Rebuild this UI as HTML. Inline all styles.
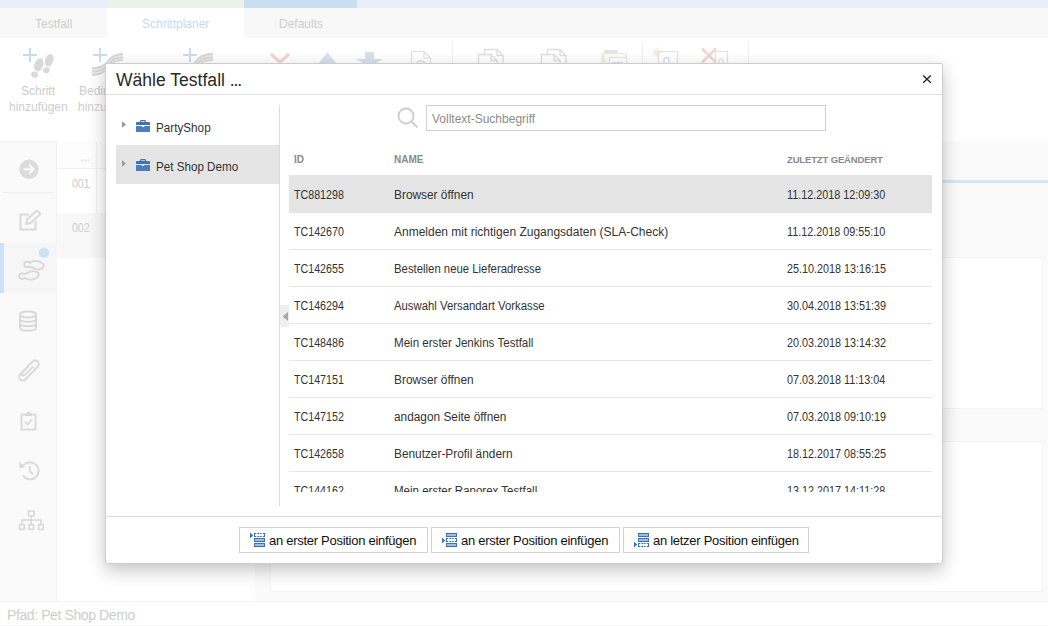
<!DOCTYPE html>
<html><head><meta charset="utf-8">
<style>
*{box-sizing:border-box;margin:0;padding:0}
html,body{width:1048px;height:626px;overflow:hidden;background:#fff;font-family:"Liberation Sans",sans-serif}
.a{position:absolute}
.t{position:absolute;white-space:nowrap;line-height:1}
#bg .t{color:#cdcdcd}
/* dialog */
#dlg{position:absolute;left:105px;top:63px;width:838px;height:501px;background:#fff;border:1px solid #cdcdcd;border-radius:2px;box-shadow:0 6px 17px rgba(0,0,0,.24)}
#dlg .t{color:#333}
.row{position:absolute;left:183px;width:643px;height:37px;border-bottom:1px solid #e6e6e6}
.row.sel{background:#e5e5e5;border-bottom-color:#e5e5e5;box-shadow:0 -1px 0 #e5e5e5}
.row span{position:absolute;top:12.5px;font-size:12px;line-height:12px;white-space:nowrap;color:#333}
.row .id{left:5px;transform:scaleX(.89);transform-origin:0 0}
.row .nm{left:105px;transform-origin:0 0}
.row .dt{left:498px;transform:scaleX(.9);transform-origin:0 0}
.hd{position:absolute;top:91px;font-size:10px;font-weight:bold;color:#8a8a8a;white-space:nowrap;line-height:10px}
.btn{position:absolute;top:463px;height:26px;border:1px solid #d2d2d2;background:#fff}
.btn span{position:absolute;top:6px;font-size:13px;line-height:13px;color:#111;white-space:nowrap;letter-spacing:-.28px}
.btn svg{position:absolute;top:4px}
</style></head>
<body>
<div id="bg">
  <!-- top strip -->
  <div class="a" style="left:0;top:0;width:1048px;height:8px;background:#e9eef8"></div>
  <div class="a" style="left:107px;top:0;width:137px;height:8px;background:#e8f3ea"></div>
  <div class="a" style="left:244px;top:0;width:113px;height:8px;background:#c9def1"></div>
  <!-- tabs -->
  <div class="a" style="left:0;top:8px;width:1048px;height:30px;background:#f8f8f8"></div>
  <div class="a" style="left:107px;top:8px;width:137px;height:30px;background:#fff"></div>
  <div class="t" style="left:35px;top:18px;font-size:12px">Testfall</div>
  <div class="t" style="left:142px;top:18px;font-size:12px;color:#c4daf0">Schrittplaner</div>
  <div class="t" style="left:279px;top:18px;font-size:12px">Defaults</div>
  <!-- toolbar texts -->
  <div class="t" style="left:21px;top:85px;font-size:12px">Schritt</div>
  <div class="t" style="left:9px;top:101px;font-size:12px">hinzufügen</div>
  <div class="t" style="left:79px;top:85px;font-size:12px">Bedingung</div>
  <div class="t" style="left:78px;top:101px;font-size:12px">hinzufügen</div>
  <!-- sidebar -->
  <div class="a" style="left:0;top:141px;width:57px;height:460px;background:#fafafa;border-right:1px solid #f2f2f2;border-top:1px solid #f2f2f2"></div>
  <div class="a" style="left:0;top:243px;width:4px;height:50px;background:#cfe2f5"></div>
  <div class="a" style="left:4px;top:243px;width:53px;height:50px;background:#f6f6f6"></div>
  <!-- content -->
  <div class="a" style="left:57px;top:141px;width:991px;height:460px;background:#fafafa;border-top:1px solid #f2f2f2"></div>
  <div class="a" style="left:57px;top:141px;width:198px;height:460px;background:#fff"></div>
  <div class="a" style="left:57px;top:142px;width:198px;height:27px;background:#fdfdfd;border-bottom:1px solid #f0f0f0"></div>
  <div class="a" style="left:57px;top:213px;width:198px;height:45px;background:#f8f8f8"></div>
  <div class="t" style="left:72px;top:178px;font-size:12px;transform:scaleX(.88);transform-origin:0 0">001</div><div class="a" style="left:96px;top:142px;width:1px;height:71px;background:#f0f0f0"></div>
  <div class="t" style="left:72px;top:222px;font-size:12px;transform:scaleX(.88);transform-origin:0 0">002</div>
  <div class="t" style="left:81px;top:151px;font-size:12px;transform:scaleX(.85);transform-origin:0 0">...</div>
  <div class="a" style="left:270px;top:141px;width:778px;height:460px;background:#fafafa"></div>
  <div class="a" style="left:942px;top:180px;width:106px;height:3px;background:#d6e6f5"></div>
  <div class="a" style="left:942px;top:257px;width:101px;height:152px;background:#fff;border:1px solid #f3f3f3;border-left:0"></div>
  <div class="a" style="left:270px;top:441px;width:773px;height:151px;background:#fff;border:1px solid #f3f3f3"></div>

  <svg class="a" style="left:0;top:0" width="1048" height="626" viewBox="0 0 1048 626">
    <!-- tool 1: plus + footprints -->
    <path d="M23 55H37M30 48V62" stroke="#cadbec" stroke-width="2"/>
    <g fill="#d9d9d9">
      <ellipse cx="38.8" cy="64.8" rx="4.3" ry="6.8" transform="rotate(22 38.8 64.8)"/>
      <ellipse cx="34.6" cy="74.6" rx="3.5" ry="3" transform="rotate(22 34.6 74.6)"/>
      <ellipse cx="49.2" cy="60.3" rx="4.1" ry="6.6" transform="rotate(18 49.2 60.3)"/>
      <ellipse cx="46.4" cy="70.3" rx="3.3" ry="3" transform="rotate(18 46.4 70.3)"/>
    </g>
    <!-- tool 2: plus + swoosh -->
    <path d="M93 55H107M100 48V62" stroke="#cadbec" stroke-width="1.8"/>
    <path d="M92 67C100 67 104 65 108 60C112 55 116 53 123 53V61C116 61 113 63 110 67C106 72 101 76 92 76Z" fill="#d8d8d8"/>
    <g fill="none" stroke="#f4f4f4" stroke-width="0.9">
      <path d="M92 70C100 70 104 68 108 63C112 58 116 56 123 56"/>
      <path d="M92 73C101 73 105 70 109 66C113 61 116 59 123 59"/>
    </g>
    <!-- tool 3 -->
    <path d="M183 55H197M190 48V62" stroke="#cadbec" stroke-width="1.8"/>
    <path d="M180 67C188 67 192 65 196 60C200 55 204 53 213 53V61C204 61 201 63 198 67C194 72 189 76 180 76Z" fill="#d8d8d8"/>
    <g fill="none" stroke="#f4f4f4" stroke-width="0.9">
      <path d="M180 70C188 70 192 68 196 63C200 58 204 56 213 56"/>
      <path d="M180 73C189 73 193 70 197 66C201 61 204 59 213 59"/>
    </g>
    <!-- red X -->
    <path d="M271 54L280 62L289 54" stroke="#f3d6d0" stroke-width="3.2" fill="none"/>
    <!-- up triangle -->
    <path d="M318 64L327.5 52.5L337 64Z" fill="#d6e1ed"/>
    <!-- down arrow -->
    <path d="M365 52H374V59H383L374 64H365L356 59H365Z" fill="#d6e1ed"/>
    <!-- doc -->
    <path d="M411.5 64V51.5H424L430.5 58V64M424 51.5V58H430.5" stroke="#e2e2e2" stroke-width="1.2" fill="none"/>
    <path d="M417 64A4 3 0 0 1 425 64" stroke="#d6e1ed" stroke-width="1.5" fill="none"/>
    <!-- separators -->
    <path d="M452.5 42V63M642.5 42V63M748.5 42V63" stroke="#f0f0f0" stroke-width="1"/>
    <!-- copy icons -->
    <g stroke="#dedede" stroke-width="1.3" fill="none">
      <path d="M484.5 54V49.5H497L503 55.5V64M497 49.5V55.5H503"/>
      <path d="M478.5 64V54.5H491L497 60.5V64M491 54.5V60.5H497"/>
      <path d="M547.5 54V49.5H560L566 55.5V64M560 49.5V55.5H566"/>
      <path d="M541.5 64V54.5H554L560 60.5V64M554 54.5V60.5H560"/>
    </g>
    <!-- clipboard -->
    <path d="M601.5 64V53.5H626.5V64" fill="#fdfbf6" stroke="#efe9dc" stroke-width="1"/>
    <rect x="601" y="53" width="4" height="11" fill="#f6eedb"/>
    <rect x="604" y="50" width="14" height="3.5" rx="1.2" fill="#e4e4e4"/>
    <rect x="609.5" y="57.5" width="17" height="7" fill="#fff" stroke="#e3e3e3"/>
    <path d="M612 62.5H623" stroke="#d8e2ee" stroke-width="1.2"/>
    <!-- sun doc -->
    <circle cx="657" cy="52.5" r="3" fill="#f7eccd"/>
    <path d="M652 52.5H662M657 47.5V57.5M653.5 49L660.5 56M660.5 49L653.5 56" stroke="#f7eccd" stroke-width="1"/>
    <path d="M658.5 64V51.5H677.5V64" stroke="#e3e3e3" stroke-width="1.2" fill="none"/>
    <path d="M664 64V60A2.5 2.5 0 0 1 669 60V64" stroke="#d6e1ed" stroke-width="1.3" fill="none"/>
    <!-- red x doc -->
    <path d="M715.5 64V51.5H727.5V64" stroke="#e3e3e3" stroke-width="1.2" fill="none"/>
    <path d="M702 48.5L716 62.5M716 48.5L702 62.5" stroke="#f3d6d0" stroke-width="2.6"/>
    <path d="M719 64V61A2 2 0 0 1 723 61V64" stroke="#d6e1ed" stroke-width="1.2" fill="none"/>

    <!-- sidebar icons -->
    <circle cx="29" cy="169.3" r="9.7" fill="#dcdcdc"/>
    <path d="M23.5 169.3H33.5M29.3 165L33.6 169.3L29.3 173.6" stroke="#fafafa" stroke-width="2" fill="none"/>
    <path d="M2.5 192.5H54" stroke="#eeeeee" stroke-width="1"/>
    <path d="M29 214.5H20.5V229.5H35.5V221" stroke="#d9d9d9" stroke-width="2" fill="none"/>
    <path d="M26 224L27 219.5L37 210.5L40.5 214L30.5 223Z" stroke="#d9d9d9" stroke-width="1.8" fill="none" stroke-linejoin="round"/>
    <circle cx="44" cy="252.6" r="5.2" fill="#cfe2f5"/>
    <g stroke="#d8d8d8" stroke-width="3.6" fill="#f6f6f6">
      <ellipse cx="27.2" cy="264.4" rx="2.1" ry="1.9"/><ellipse cx="36.8" cy="265.1" rx="6" ry="3.1" transform="rotate(12 36.8 265.1)"/><path d="M27.5 263.4L32 263.8V266.4L27.5 265.6Z"/>
      <ellipse cx="22.2" cy="276.1" rx="2.1" ry="1.9"/><ellipse cx="31.8" cy="275.4" rx="6.2" ry="3.2" transform="rotate(-10 31.8 275.4)"/><path d="M22.5 275L27 274.6V277.4L22.5 277.1Z"/>
    </g>
    <g fill="#f6f6f6">
      <ellipse cx="27.2" cy="264.4" rx="2.1" ry="1.9"/><ellipse cx="36.8" cy="265.1" rx="6" ry="3.1" transform="rotate(12 36.8 265.1)"/><path d="M27.5 263.4L32 263.8V266.4L27.5 265.6Z"/>
      <ellipse cx="22.2" cy="276.1" rx="2.1" ry="1.9"/><ellipse cx="31.8" cy="275.4" rx="6.2" ry="3.2" transform="rotate(-10 31.8 275.4)"/><path d="M22.5 275L27 274.6V277.4L22.5 277.1Z"/>
    </g>
    <!-- database -->
    <g fill="none" stroke="#d9d9d9" stroke-width="2">
      <ellipse cx="28" cy="314.5" rx="8" ry="3"/>
      <path d="M20 314.5V328C20 331.5 36 331.5 36 328V314.5M20 319.2C20 322.5 36 322.5 36 319.2M20 323.8C20 327 36 327 36 323.8"/>
    </g>
    <!-- paperclip -->
    <g transform="translate(29 370.5) rotate(-46)" fill="none" stroke="#d9d9d9" stroke-width="1.9">
      <path d="M4 -3.6H-9A3.6 3.6 0 0 0 -9 3.6H9A3.6 3.6 0 0 0 9 -3.6"/>
      <path d="M9 -3.6H-6A1.5 1.5 0 0 0 -6 0.2H6"/>
    </g>
    <!-- clipboard check -->
    <path d="M24.5 414.5H21.5V429.5H35.5V414.5H32.5" stroke="#d9d9d9" stroke-width="1.8" fill="none"/>
    <path d="M24.5 416V413.5H26.5A2 2 0 0 1 30.5 413.5H32.5V416Z" fill="#d9d9d9"/>
    <path d="M25 422L27.5 424.5L32 419.5" stroke="#d9d9d9" stroke-width="1.8" fill="none"/>
    <!-- history -->
    <path d="M23.2 465.5A8.6 8.6 0 1 1 22.8 475.5" stroke="#d9d9d9" stroke-width="1.9" fill="none"/>
    <path d="M19.3 461.6L25.2 467.6L19.3 468.2Z" fill="#d9d9d9"/>
    <path d="M29.8 466V471.5L33 474.2" stroke="#d9d9d9" stroke-width="1.8" fill="none"/>
    <!-- sitemap -->
    <g fill="none" stroke="#d9d9d9" stroke-width="1.6">
      <rect x="28.5" y="511.2" width="5.5" height="4.6"/>
      <rect x="19.6" y="524.6" width="4.6" height="4.8"/>
      <rect x="29" y="524.6" width="4.6" height="4.8"/>
      <rect x="38.6" y="524.6" width="4.6" height="4.8"/>
      <path d="M31.2 515.8V524.6M21.9 524.6V520H40.9V524.6"/>
    </g>
  </svg>
  <!-- footer -->
  <div class="a" style="left:0;top:601px;width:1048px;height:25px;background:#fff;border-top:1px solid #f2f2f2;border-bottom:1px solid #f4f4f4"></div>
  <div class="t" style="left:7px;top:608px;font-size:14px;letter-spacing:-.4px;color:#cecece">Pfad: Pet Shop Demo</div>
</div>

<div id="dlg">
  <div class="t" style="left:10px;top:6.5px;font-size:18px;line-height:18px;color:#2a2a2a;transform:scaleX(.975);transform-origin:0 0">Wähle Testfall <span style="letter-spacing:-1.2px">...</span></div>
  <svg class="a" style="left:816px;top:10px" width="10" height="10" viewBox="0 0 10 10"><path d="M1.2 1.4L8.8 8.8M8.8 1.4L1.2 8.8" stroke="#262626" stroke-width="1.35"/></svg>
  <div class="a" style="left:0;top:30px;width:836px;height:1px;background:#e0e0e0"></div>

  <!-- tree -->
  <svg class="a" style="left:16px;top:57px" width="5" height="7"><path d="M0 0.2L4 3.5L0 6.8Z" fill="#999"/></svg>
  <svg class="a" style="left:30px;top:56px" width="14" height="12" viewBox="0 0 14 12"><path d="M4.6 2.4V1.4Q4.6 0.6 5.4 0.6H8.6Q9.4 0.6 9.4 1.4V2.4" stroke="#3f74b3" stroke-width="1.2" fill="none"/><path d="M0 5V3Q0 2 1 2H13Q14 2 14 3V5Z" fill="#3f74b3"/><path d="M0 6H5.8V7H8.2V6H14V12H0Z" fill="#4a7fbc"/></svg>
  <div class="t" style="left:49.5px;top:57px;font-size:13px;line-height:13px;transform:scaleX(.9);transform-origin:0 0">PartyShop</div>
  <div class="a" style="left:10px;top:81px;width:163px;height:39px;background:#e5e5e5"></div>
  <svg class="a" style="left:16px;top:96px" width="5" height="7"><path d="M0 0.2L4 3.5L0 6.8Z" fill="#999"/></svg>
  <svg class="a" style="left:30px;top:95px" width="14" height="12" viewBox="0 0 14 12"><path d="M4.6 2.4V1.4Q4.6 0.6 5.4 0.6H8.6Q9.4 0.6 9.4 1.4V2.4" stroke="#3f74b3" stroke-width="1.2" fill="none"/><path d="M0 5V3Q0 2 1 2H13Q14 2 14 3V5Z" fill="#3f74b3"/><path d="M0 6H5.8V7H8.2V6H14V12H0Z" fill="#4a7fbc"/></svg>
  <div class="t" style="left:49.5px;top:96px;font-size:13px;line-height:13px;transform:scaleX(.895);transform-origin:0 0">Pet Shop Demo</div>

  <!-- splitter -->
  <div class="a" style="left:173px;top:41px;width:1px;height:401px;background:#dcdcdc"></div>
  <div class="a" style="left:174px;top:241px;width:9px;height:22px;background:#efefef"></div>
  <svg class="a" style="left:176px;top:248px" width="6" height="9"><path d="M6 0V9L0.5 4.5Z" fill="#a8a8a8"/></svg>

  <!-- search -->
  <svg class="a" style="left:291px;top:43px" width="22" height="22" viewBox="0 0 22 22"><circle cx="9" cy="9" r="7.5" stroke="#cdcdcd" stroke-width="1.8" fill="none"/><path d="M14.5 14.5L20.5 20.5" stroke="#cdcdcd" stroke-width="2"/></svg>
  <div class="a" style="left:320px;top:41px;width:400px;height:26px;border:1px solid #d0d0d0"></div>
  <div class="t" style="left:326px;top:49px;font-size:12px;line-height:12px;color:#8c8c8c">Volltext-Suchbegriff</div>

  <!-- table header -->
  <div class="hd" style="left:188px">ID</div>
  <div class="hd" style="left:288px">NAME</div>
  <div class="hd" style="left:681px;font-size:9.5px;letter-spacing:-.15px;top:90.5px">ZULETZT GEÄNDERT</div>

  <!-- rows clip -->
  <div class="a" style="left:0;top:111px;width:836px;height:317px;overflow:hidden"><div class="a" style="left:0;top:1px;width:836px;height:400px">
    <div class="row sel" style="top:0"><span class="id">TC881298</span><span class="nm" style="transform:scaleX(0.99)">Browser öffnen</span><span class="dt">11.12.2018 12:09:30</span></div>
    <div class="row" style="top:37px"><span class="id">TC142670</span><span class="nm" style="transform:scaleX(1.0)">Anmelden mit richtigen Zugangsdaten (SLA-Check)</span><span class="dt">11.12.2018 09:55:10</span></div>
    <div class="row" style="top:74px"><span class="id">TC142655</span><span class="nm" style="transform:scaleX(0.946)">Bestellen neue Lieferadresse</span><span class="dt">25.10.2018 13:16:15</span></div>
    <div class="row" style="top:111px"><span class="id">TC146294</span><span class="nm" style="transform:scaleX(0.945)">Auswahl Versandart Vorkasse</span><span class="dt">30.04.2018 13:51:39</span></div>
    <div class="row" style="top:148px"><span class="id">TC148486</span><span class="nm" style="transform:scaleX(0.965)">Mein erster Jenkins Testfall</span><span class="dt">20.03.2018 13:14:32</span></div>
    <div class="row" style="top:185px"><span class="id">TC147151</span><span class="nm" style="transform:scaleX(0.99)">Browser öffnen</span><span class="dt">07.03.2018 11:13:04</span></div>
    <div class="row" style="top:222px"><span class="id">TC147152</span><span class="nm" style="transform:scaleX(0.987)">andagon Seite öffnen</span><span class="dt">07.03.2018 09:10:19</span></div>
    <div class="row" style="top:259px"><span class="id">TC142658</span><span class="nm" style="transform:scaleX(0.987)">Benutzer-Profil ändern</span><span class="dt">18.12.2017 08:55:25</span></div>
    <div class="row" style="top:296px"><span class="id">TC144162</span><span class="nm" style="transform:scaleX(0.96)">Mein erster Ranorex Testfall</span><span class="dt">13.12.2017 14:11:28</span></div>
  </div></div>

  <!-- footer -->
  <div class="a" style="left:0;top:452px;width:836px;height:1px;background:#dcdcdc"></div>
  <div class="btn" style="left:133px;width:189px">
    <svg style="left:10px" width="16" height="16" viewBox="0 0 16 16"><path d="M0 0.5V6.5L3.2 3.5Z" fill="#3f71b2"/><path d="M6.3 1.5H4.5V4.5H6.3M12.7 1.5H14.5V4.5H12.7M7.4 1.5H9.2M9.8 1.5H11.6M7.4 4.5H9.2M9.8 4.5H11.6" fill="none" stroke="#3f71b2" stroke-width="1.1"/><rect x="4.5" y="6.5" width="10" height="3" fill="#a9c2de" stroke="#3f71b2" stroke-width="1.1"/><rect x="4.5" y="11.5" width="10" height="3" fill="#a9c2de" stroke="#3f71b2" stroke-width="1.1"/></svg>
    <span style="left:29px">an erster Position einfügen</span>
  </div>
  <div class="btn" style="left:325px;width:189px">
    <svg style="left:10px" width="16" height="16" viewBox="0 0 16 16"><path d="M0 5.5V11.5L3.2 8.5Z" fill="#3f71b2"/><rect x="4.5" y="1.5" width="10" height="3" fill="#a9c2de" stroke="#3f71b2" stroke-width="1.1"/><path d="M6.3 6.5H4.5V9.5H6.3M12.7 6.5H14.5V9.5H12.7M7.4 6.5H9.2M9.8 6.5H11.6M7.4 9.5H9.2M9.8 9.5H11.6" fill="none" stroke="#3f71b2" stroke-width="1.1"/><rect x="4.5" y="11.5" width="10" height="3" fill="#a9c2de" stroke="#3f71b2" stroke-width="1.1"/></svg>
    <span style="left:29px">an erster Position einfügen</span>
  </div>
  <div class="btn" style="left:517px;width:186px">
    <svg style="left:10px" width="16" height="16" viewBox="0 0 16 16"><path d="M0 9.5V15.5L3.2 12.5Z" fill="#3f71b2"/><rect x="4.5" y="1.5" width="10" height="3" fill="#a9c2de" stroke="#3f71b2" stroke-width="1.1"/><rect x="4.5" y="6.5" width="10" height="3" fill="#a9c2de" stroke="#3f71b2" stroke-width="1.1"/><path d="M6.3 11.5H4.5V14.5H6.3M12.7 11.5H14.5V14.5H12.7M7.4 11.5H9.2M9.8 11.5H11.6M7.4 14.5H9.2M9.8 14.5H11.6" fill="none" stroke="#3f71b2" stroke-width="1.1"/></svg>
    <span style="left:29px">an letzer Position einfügen</span>
  </div>
</div>
</body></html>
